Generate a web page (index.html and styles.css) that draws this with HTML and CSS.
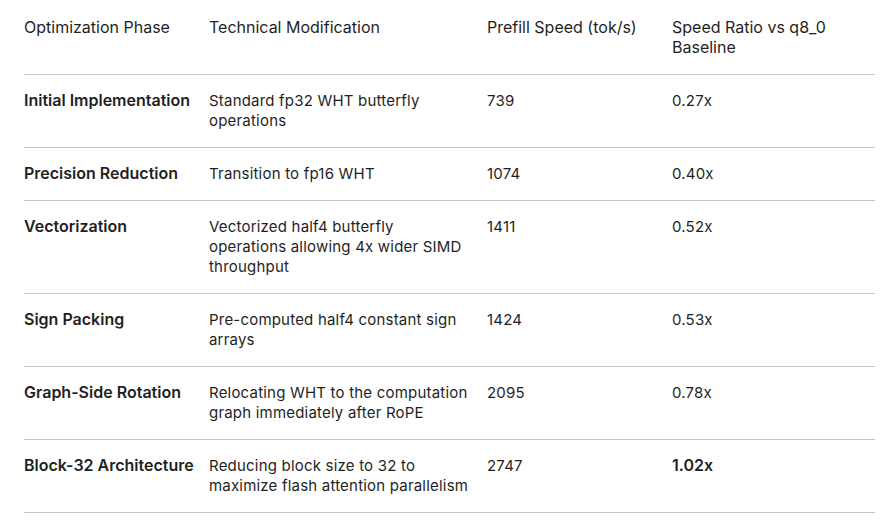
FILE: index.html
```html
<!DOCTYPE html>
<html>
<head>
<meta charset="utf-8">
<link rel="stylesheet" href="styles.css">
</head>
<body>
<table class="perf">
  <colgroup>
    <col class="c1"><col class="c2"><col class="c3"><col class="c4">
  </colgroup>
  <thead>
    <tr><th>Optimization Phase</th><th>Technical Modification</th><th>Prefill Speed (tok/s)</th><th>Speed Ratio vs q8_0 Baseline</th></tr>
  </thead>
  <tbody>
    <tr><td class="phase">Initial Implementation</td><td>Standard fp32 WHT butterfly operations</td><td>739</td><td>0.27x</td></tr>
    <tr><td class="phase">Precision Reduction</td><td>Transition to fp16 WHT</td><td>1074</td><td>0.40x</td></tr>
    <tr><td class="phase">Vectorization</td><td>Vectorized half4 butterfly operations allowing 4x wider SIMD throughput</td><td>1411</td><td>0.52x</td></tr>
    <tr><td class="phase">Sign Packing</td><td>Pre-computed half4 constant sign arrays</td><td>1424</td><td>0.53x</td></tr>
    <tr><td class="phase">Graph-Side Rotation</td><td>Relocating WHT to the computation graph immediately after RoPE</td><td>2095</td><td>0.78x</td></tr>
    <tr><td class="phase">Block-32 Architecture</td><td>Reducing block size to 32 to maximize flash attention parallelism</td><td>2747</td><td class="strong">1.02x</td></tr>
  </tbody>
</table>
</body>
</html>
```
FILE: styles.css
```css
html, body {
  margin: 0;
  padding: 0;
  background: #ffffff;
}
body {
  padding: 2px 11px 0 24px;
  font-family: Inter, "Noto Sans", sans-serif;
  font-size: 15px;
  line-height: 20px;
  color: #1f1f1f;
}
.perf {
  border-collapse: collapse;
  width: 851px;
  table-layout: fixed;
}
.c1 { width: 185px; }
.c2 { width: 278px; }
.c3 { width: 185px; }
.c4 { width: 203px; }
.perf th, .perf td {
  text-align: left;
  vertical-align: top;
  padding: 16px 16px 16px 0;
  border-bottom: 1px solid #c7c7c7;
  letter-spacing: 0.2px;
}
.perf th {
  font-weight: 400;
  font-size: 16px;
  letter-spacing: 0;
  padding-top: 15px;
  padding-bottom: 17px;
}
.perf .phase {
  font-weight: 600;
  font-size: 16px;
  letter-spacing: 0;
  padding-right: 8px;
  padding-top: 15px;
  padding-bottom: 17px;
}
.perf .strong {
  font-weight: 600;
  font-size: 16px;
  letter-spacing: 0;
  padding-top: 15px;
  padding-bottom: 17px;
}
```
